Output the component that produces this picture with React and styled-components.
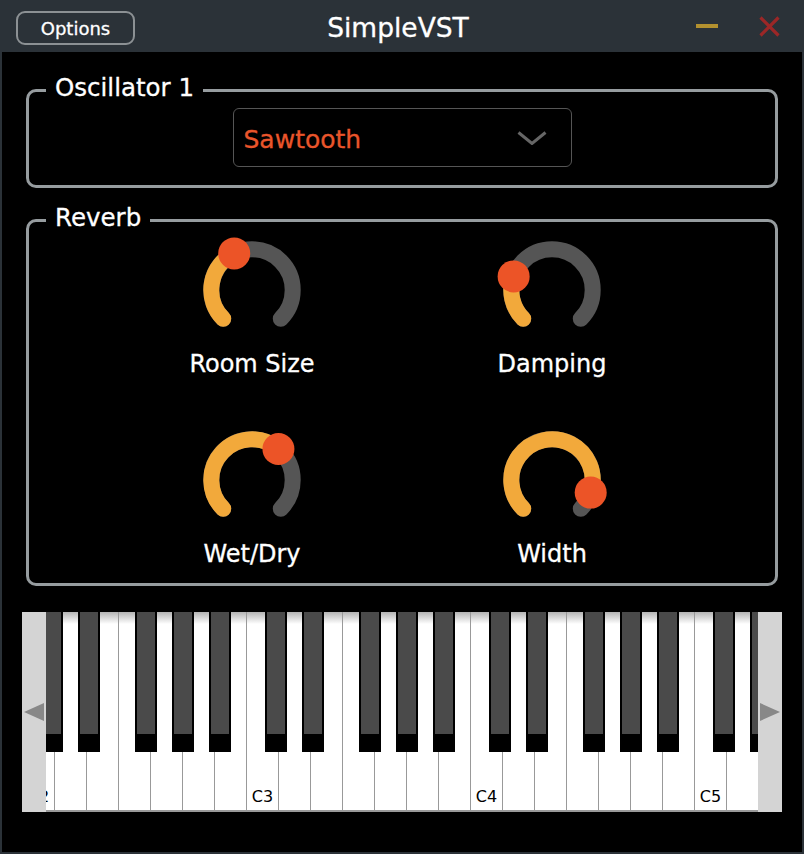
import React from 'react';
import styled, { createGlobalStyle } from 'styled-components';

const GlobalStyle = createGlobalStyle`
    html, body {
        margin: 0;
        background: #2b3238;
        font-family: "DejaVu Sans", "Noto Sans", sans-serif;
    }
`;

const Window = styled.div`
    width: 804px;
    height: 854px;
    display: flex;
    flex-direction: column;
    background: #2b3238;
`;

const TitleBar = styled.div`
    height: 52px;
    flex-shrink: 0;
    display: grid;
    grid-template-columns: 1fr auto 1fr;
    align-items: center;
    padding: 0 24px 0 16px;
    box-sizing: border-box;
`;

const OptionsButton = styled.button`
    justify-self: start;
    margin-top: 4px;
    width: 119px;
    height: 34px;
    border: 2px solid #8c9194;
    border-radius: 9px;
    background: transparent;
    color: #fff;
    font-family: "DejaVu Sans", sans-serif;
    font-size: 18px;
    -webkit-text-stroke: 0.3px #fff;
    padding: 0;
`;

const Title = styled.div`
    margin-top: 4px;
    font-size: 26.5px;
    line-height: 30px;
    color: #fff;
    -webkit-text-stroke: 0.3px #fff;
`;

const WindowControls = styled.div`
    justify-self: end;
    display: flex;
    align-items: center;
    gap: 41px;
`;

const Body = styled.div`
    flex: 1;
    background: #000;
    margin: 0 2px 2px;
    padding: 37px 20px 0;
    display: flex;
    flex-direction: column;
`;

const GroupBox = styled.div`
    position: relative;
    margin: ${p => p.$top || 0}px 4px 0;
    border: 3px solid #969c9f;
    border-radius: 10px;
    padding: ${p => p.$pad};
`;

const GroupLabel = styled.div`
    position: absolute;
    top: -18px;
    left: 17px;
    padding: 0 9px;
    background: #000;
    color: #fff;
    font-size: 24.5px;
    line-height: 28px;
    -webkit-text-stroke: 0.3px #fff;
`;

const Dropdown = styled.div`
    width: 339px;
    height: 59px;
    margin: 0 auto;
    box-sizing: border-box;
    border: 1.5px solid #555;
    border-radius: 6px;
    display: flex;
    align-items: center;
    justify-content: space-between;
    padding: 3px 24px 0 10px;
    color: #ea552b;
    font-size: 25px;
    -webkit-text-stroke: 0.3px #ea552b;
`;

const Chevron = styled.svg`
    margin-top: -3px;
`;

const KnobGrid = styled.div`
    display: grid;
    grid-template-columns: repeat(2, 300px);
    justify-content: center;
    row-gap: 52px;
`;

const KnobCell = styled.div`
    display: flex;
    flex-direction: column;
    align-items: center;
`;

const KnobSvg = styled.svg`
    display: block;
    overflow: visible;
`;

const KnobLabel = styled.div`
    margin-top: 10px;
    font-size: 24px;
    line-height: 28px;
    color: #fff;
    -webkit-text-stroke: 0.3px #fff;
`;

const Keyboard = styled.div`
    position: relative;
    margin-top: 26px;
    height: 200px;
    overflow: hidden;
    display: flex;
    padding-left: 1px;
    background: #fff;
`;

const WhiteKey = styled.div`
    flex: 0 0 32px;
    box-sizing: border-box;
    border-right: 1.5px solid #999;
    border-bottom: 2px solid #999;
    background: linear-gradient(to bottom, #b4b4b4 0, #fff 12px);
    display: flex;
    align-items: flex-end;
    justify-content: center;
    padding-bottom: 4px;
    font-size: 16px;
    color: #000;
`;

const BlackKey = styled.div`
    position: absolute;
    top: 0;
    width: 22px;
    height: 140px;
    box-sizing: border-box;
    background: #4a4a4a;
    border: solid #000;
    border-width: 0 2px 18px 2px;
`;

const ScrollStrip = styled.div`
    position: absolute;
    top: 0;
    bottom: 0;
    ${p => (p.$side === 'left' ? 'left: 0;' : 'right: 0;')}
    width: 24px;
    background: #d4d4d4;
    display: flex;
    align-items: center;
    justify-content: center;
`;

const Arrow = styled.div`
    width: 0;
    height: 0;
    border-top: 9.5px solid transparent;
    border-bottom: 9.5px solid transparent;
    ${p => (p.$side === 'left'
        ? 'border-right: 20px solid #888;'
        : 'border-left: 20px solid #888;')}
`;

// angles are measured clockwise from 12 o'clock
const polar = (cx, cy, r, deg) => {
    const a = (deg * Math.PI) / 180;
    return [cx + r * Math.sin(a), cy - r * Math.cos(a)];
};

const arc = (cx, cy, r, from, to) => {
    const [x1, y1] = polar(cx, cy, r, from);
    const [x2, y2] = polar(cx, cy, r, to);
    const large = to - from > 180 ? 1 : 0;
    return `M ${x1} ${y1} A ${r} ${r} 0 ${large} 1 ${x2} ${y2}`;
};

function Knob({ label, value }) {
    const start = -135;
    const end = 135;
    const angle = start + (end - start) * value;
    const r = 40.7;
    const [tx, ty] = polar(50, 50, r, angle);
    return (
        <KnobCell>
            <KnobSvg width="100" height="100" viewBox="0 0 100 100">
                <path d={arc(50, 50, r, start, end)} fill="none" stroke="#555555" strokeWidth="16" strokeLinecap="round" />
                <path d={arc(50, 50, r, start, angle)} fill="none" stroke="#f2a93b" strokeWidth="16" strokeLinecap="round" />
                <circle cx={tx} cy={ty} r="16" fill="#ec5427" />
            </KnobSvg>
            <KnobLabel>{label}</KnobLabel>
        </KnobCell>
    );
}

const blackOffsets = [18, 54.5, 112, 148.5, 185.5];

export default function App() {
    const whiteKeys = Array.from({ length: 24 }, (_, i) => i);
    const blackKeys = [];
    for (let oct = 0; oct < 4; oct++) {
        blackOffsets.forEach(off => blackKeys.push(oct * 224 + off + 1));
    }

    return (
        <>
            <GlobalStyle />
            <Window>
                <TitleBar>
                    <OptionsButton>Options</OptionsButton>
                    <Title>SimpleVST</Title>
                    <WindowControls>
                        <svg width="22" height="4" viewBox="0 0 22 4">
                            <rect x="0" y="0" width="22" height="4" fill="#b3912f" />
                        </svg>
                        <svg width="21" height="21" viewBox="0 0 21 21">
                            <path d="M1.5 1.5 L19.5 19.5 M19.5 1.5 L1.5 19.5" stroke="#9b2727" strokeWidth="3.2" />
                        </svg>
                    </WindowControls>
                </TitleBar>
                <Body>
                    <GroupBox $pad="16px 0 18px">
                        <GroupLabel>Oscillator 1</GroupLabel>
                        <Dropdown>
                            <span>Sawtooth</span>
                            <Chevron width="30" height="14" viewBox="0 0 30 14">
                                <polyline points="1.5,1.5 15,12.5 28.5,1.5" fill="none" stroke="#666" strokeWidth="3" />
                            </Chevron>
                        </Dropdown>
                    </GroupBox>
                    <GroupBox $top={31} $pad="18px 0 15px">
                        <GroupLabel>Reverb</GroupLabel>
                        <KnobGrid>
                            <Knob label="Room Size" value={0.404} />
                            <Knob label="Damping" value={0.239} />
                            <Knob label="Wet/Dry" value={0.65} />
                            <Knob label="Width" value={0.9} />
                        </KnobGrid>
                    </GroupBox>
                    <Keyboard>
                        {whiteKeys.map(i => (
                            <WhiteKey key={i}>{i % 7 === 0 ? `C${2 + i / 7}` : ''}</WhiteKey>
                        ))}
                        {blackKeys.map(x => (
                            <BlackKey key={x} style={{ left: x }} />
                        ))}
                        <ScrollStrip $side="left"><Arrow $side="left" /></ScrollStrip>
                        <ScrollStrip $side="right"><Arrow $side="right" /></ScrollStrip>
                    </Keyboard>
                </Body>
            </Window>
        </>
    );
}
